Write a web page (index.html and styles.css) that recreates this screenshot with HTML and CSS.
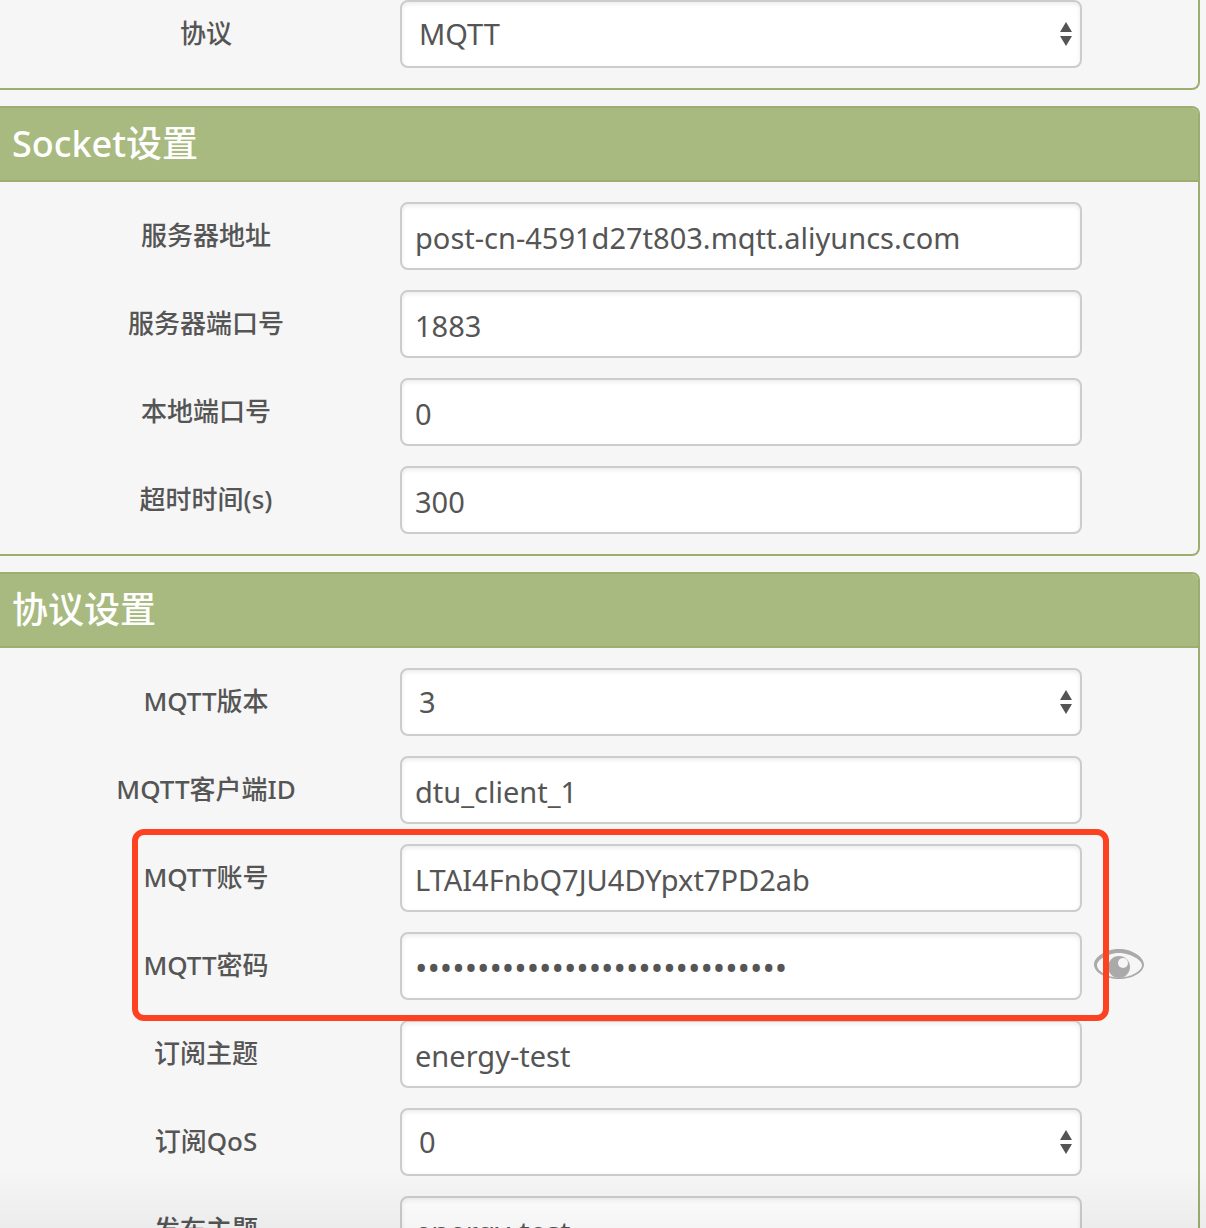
FILE: index.html
```html
<!DOCTYPE html>
<html lang="zh-CN">
<head>
  <meta charset="utf-8">
  <meta name="viewport" content="width=device-width, initial-scale=1">
  <title>协议设置</title>
  <link rel="stylesheet" href="styles.css">
</head>
<body>
  <form class="settings">
    <section class="panel panel-first">
      <div class="panel-body">
        <div class="row">
          <label for="protocol">协议</label>
          <div class="select-wrap">
            <select id="protocol"><option>MQTT</option></select>
          </div>
        </div>
      </div>
    </section>

    <section class="panel">
      <h2>Socket设置</h2>
      <div class="panel-body">
        <div class="row">
          <label for="server-address">服务器地址</label>
          <input id="server-address" type="text" value="post-cn-4591d27t803.mqtt.aliyuncs.com">
        </div>
        <div class="row">
          <label for="server-port">服务器端口号</label>
          <input id="server-port" type="text" value="1883">
        </div>
        <div class="row">
          <label for="local-port">本地端口号</label>
          <input id="local-port" type="text" value="0">
        </div>
        <div class="row">
          <label for="timeout">超时时间(s)</label>
          <input id="timeout" type="text" value="300">
        </div>
      </div>
    </section>

    <section class="panel">
      <h2>协议设置</h2>
      <div class="panel-body">
        <div class="row">
          <label for="mqtt-version">MQTT版本</label>
          <div class="select-wrap">
            <select id="mqtt-version"><option>3</option></select>
          </div>
        </div>
        <div class="row">
          <label for="client-id">MQTT客户端ID</label>
          <input id="client-id" type="text" value="dtu_client_1">
        </div>
        <!-- account and password are marked with the red frame -->
        <div class="highlight">
          <div class="row">
            <label for="account">MQTT账号</label>
            <input id="account" type="text" value="LTAI4FnbQ7JU4DYpxt7PD2ab">
          </div>
          <div class="row">
            <label for="password">MQTT密码</label>
            <input id="password" type="password" value="123456789012345678901234567890">
            <button class="eye" type="button" aria-label="显示密码">
              <svg width="50" height="30" viewBox="0 0 50 30">
                <path fill="#aaa" fill-rule="evenodd" d="M25 0C38 0 50 8 50 15.500C50 23 39 30 25 30S0 23 0 15.500C0 8 12 0 25 0ZM25 4C14 4 3 11 3 16C3 22 13 28.500 25 28.500S48 22 48 16C48 11 36 4 25 4Z"/>
                <circle cx="25" cy="18" r="11" fill="#aaa"/>
                <circle cx="29" cy="14" r="5" fill="#f6f6f6"/>
              </svg>
            </button>
          </div>
        </div>
        <div class="row">
          <label for="sub-topic">订阅主题</label>
          <input id="sub-topic" type="text" value="energy-test">
        </div>
        <div class="row">
          <label for="sub-qos">订阅QoS</label>
          <div class="select-wrap">
            <select id="sub-qos"><option>0</option></select>
          </div>
        </div>
        <div class="row">
          <label for="pub-topic">发布主题</label>
          <input id="pub-topic" type="text" value="energy-test">
        </div>
      </div>
    </section>
  </form>
  <div class="bottom-fade"></div>
</body>
</html>
```

FILE: styles.css
```css
* {
  box-sizing: border-box;
}

body {
  margin: 0;
  height: 100vh;
  overflow: hidden;
  font-family: "Noto Sans", "Noto Sans CJK SC", sans-serif;
  color: #555;
  background-color: #f6f6f6;
}

.settings {
  display: flex;
  flex-direction: column;
  gap: 16px;
  margin-right: 6px;
}

.panel {
  border: 2px solid #9caf70;
  border-left: none;
  border-radius: 0 8px 8px 0;
}

.panel-first {
  border-top: none;
  border-top-right-radius: 0;
}

h2 {
  margin: 0;
  padding: 0 12px;
  height: 74px;
  border-bottom: 2px solid #9caf70;
  border-top-right-radius: 6px;
  font-size: 36px;
  font-weight: 500;
  line-height: 72px;
  color: #fff;
  background-color: #a8ba7f;
}

.panel-body {
  display: flex;
  flex-direction: column;
  gap: 20px;
  padding: 20px 0;
}

.panel-first .panel-body {
  padding-top: 0;
}

.row {
  display: grid;
  grid-template-columns: 388px 1fr 104px;
  column-gap: 12px;
  align-items: center;
}

label {
  padding: 0 0 2px 24px;
  font-size: 26px;
  font-weight: 500;
  line-height: 36px;
  text-align: center;
}

input,
select {
  display: block;
  width: 100%;
  height: 68px;
  margin: 0;
  border: 2px solid #ccc;
  border-radius: 8px;
  font-family: inherit;
  font-size: 29px;
  color: #555;
  background-color: #fff;
  box-shadow: inset 0 2px 4px rgba(0, 0, 0, 0.08);
}

input {
  padding: 2px 13px 0;
}

input[type="password"] {
  font-size: 33px;
}

select {
  padding: 0 40px 2px 17px;
  appearance: none;
}

.select-wrap {
  position: relative;
}

/* up and down arrows of the drop-down */
.select-wrap::before,
.select-wrap::after {
  content: "";
  position: absolute;
  right: 10px;
  border: 6px solid transparent;
  pointer-events: none;
}

.select-wrap::before {
  top: 22px;
  border-top: none;
  border-bottom: 10px solid #555;
}

.select-wrap::after {
  top: 36px;
  border-top: 10px solid #555;
  border-bottom: none;
}

.highlight {
  position: relative;
  display: flex;
  flex-direction: column;
  gap: 20px;
}

.highlight::after {
  content: "";
  position: absolute;
  top: -15px;
  right: 89px;
  bottom: -21px;
  left: 132px;
  border: 6px solid #fc4220;
  border-radius: 12px;
  pointer-events: none;
}

.eye {
  justify-self: start;
  padding: 0 0 4px;
  border: none;
  background: none;
  cursor: pointer;
}

.eye svg {
  display: block;
}

.bottom-fade {
  position: fixed;
  right: 0;
  bottom: 0;
  left: 0;
  height: 60px;
  background: linear-gradient(rgba(0, 0, 0, 0), rgba(0, 0, 0, 0.04));
  pointer-events: none;
}
```
